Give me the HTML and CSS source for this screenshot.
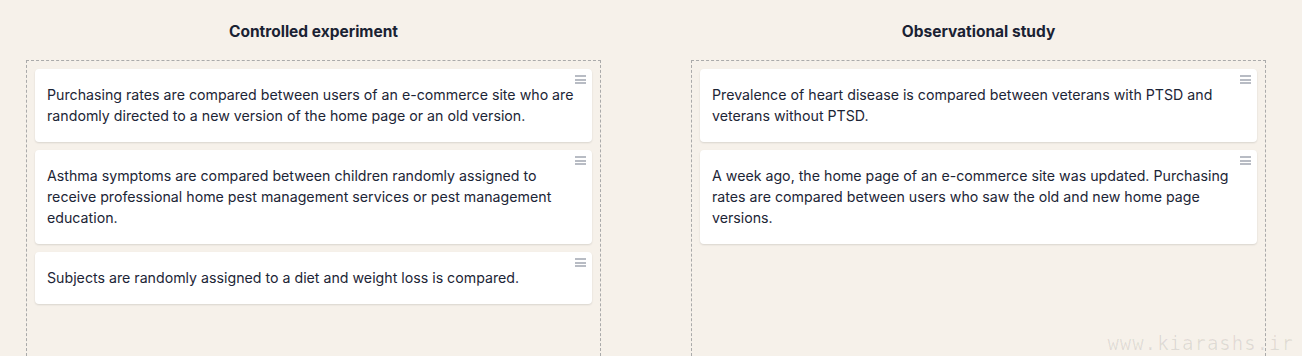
FILE: index.html
```html
<!DOCTYPE html>
<html lang="en">
<head>
    <meta charset="UTF-8" />
    <title>Sort the studies</title>
    <link rel="stylesheet" href="styles.css">
</head>
<body>
<div class="board">
    <div class="column">
        <h2>Controlled experiment</h2>
        <div class="dropzone">
            <div class="card">
                <span class="handle"></span>
                <p>Purchasing rates are compared between users of an e-commerce site who are randomly directed to a new version of the home page or an old version.</p>
            </div>
            <div class="card">
                <span class="handle"></span>
                <p>Asthma symptoms are compared between children randomly assigned to receive professional home pest management services or pest management education.</p>
            </div>
            <div class="card">
                <span class="handle"></span>
                <p>Subjects are randomly assigned to a diet and weight loss is compared.</p>
            </div>
        </div>
    </div>
    <div class="column">
        <h2>Observational study</h2>
        <div class="dropzone">
            <div class="card">
                <span class="handle"></span>
                <p>Prevalence of heart disease is compared between veterans with PTSD and veterans without PTSD.</p>
            </div>
            <div class="card">
                <span class="handle"></span>
                <p>A week ago, the home page of an e-commerce site was updated. Purchasing rates are compared between users who saw the old and new home page versions.</p>
            </div>
        </div>
    </div>
</div>
<div class="watermark">www.kiarashs.ir</div>
</body>
</html>
```

FILE: styles.css
```css
* {
    margin: 0;
    padding: 0;
    box-sizing: border-box;
}

html, body {
    height: 100%;
    overflow: hidden;
}

body {
    background-color: #f6f1ea;
    color: #1c2536;
    font-family: Inter, "Noto Sans", sans-serif;
}

.board {
    display: grid;
    grid-template-columns: 575px 575px;
    column-gap: 90px;
    height: 100%;
    padding: 22px 36px 0 26px;
}

.column {
    display: flex;
    flex-direction: column;
    min-height: 0;
}

.column h2 {
    text-align: center;
    font-size: 15.5px;
    font-weight: 700;
    line-height: 20px;
    margin-bottom: 18px;
    color: #1a2233;
}

.dropzone {
    flex: 1;
    border: 1px dashed #aaaaaa;
    border-bottom: none;
    padding: 8px 8px 0 8px;
    display: flex;
    flex-direction: column;
    gap: 8px;
}

.card {
    position: relative;
    background-color: white;
    border-radius: 4px;
    box-shadow: 0 1px 2px rgba(0, 0, 0, 0.12);
    padding: 15px 16px 16px 12px;
}

.card p {
    font-size: 14.2px;
    line-height: 21px;
}

.handle {
    position: absolute;
    top: 6px;
    right: 6px;
    width: 11px;
    height: 9px;
    border-top: 2px solid #b8bcc4;
    border-bottom: 2px solid #b8bcc4;
}

.handle::after {
    content: "";
    position: absolute;
    left: 0;
    right: 0;
    top: 1.5px;
    border-top: 2px solid #b8bcc4;
}

.watermark {
    position: absolute;
    right: 8px;
    bottom: 2px;
    font-family: "DejaVu Sans Mono", monospace;
    font-size: 19px;
    letter-spacing: 1px;
    color: rgba(0, 0, 0, 0.09);
}
```
